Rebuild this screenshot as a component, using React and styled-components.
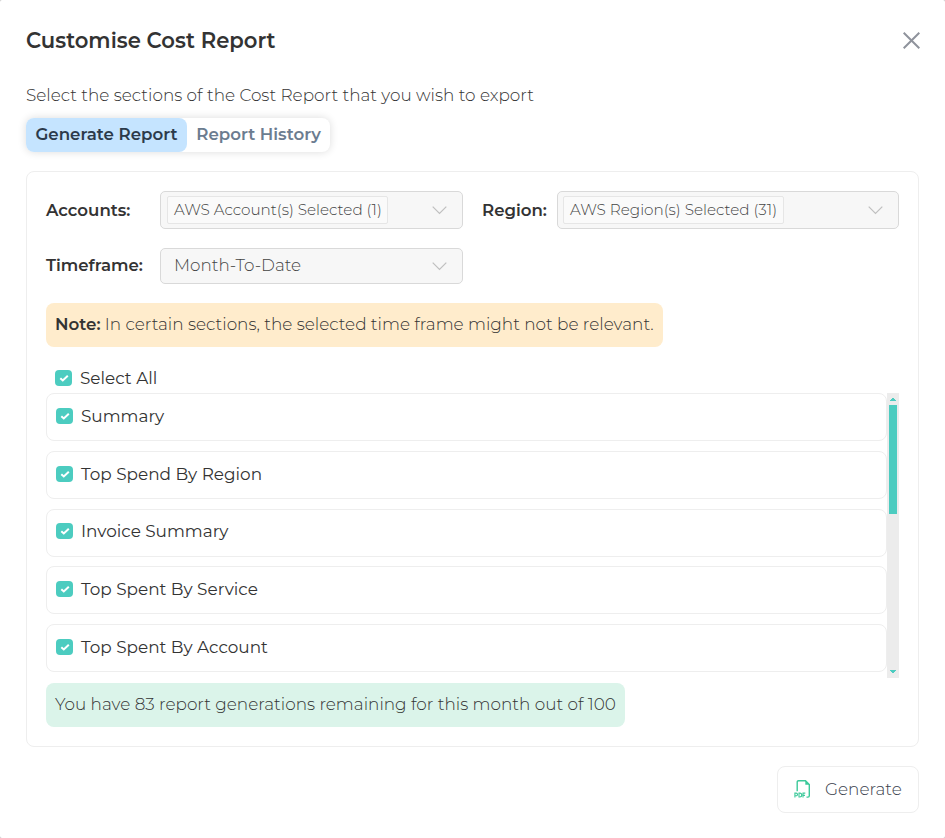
import React, { useState } from "react";
import styled, { createGlobalStyle } from "styled-components";

const GlobalStyle = createGlobalStyle`
  *, *::before, *::after { box-sizing: border-box; }
  body {
    margin: 0;
    background: #c4c4c4;
    color: #333;
    font-family: Montserrat, Inter, sans-serif;
    font-size: 16.87px;
    line-height: 24px;
  }
  button { font: inherit; color: inherit; cursor: pointer; }
`;

const Dialog = styled.main`
  height: 838px;
  padding: 26px 26px 24px;
  background: #fff;
  border-radius: 2px;
  display: flex;
  flex-direction: column;
  align-items: stretch;
`;

const Header = styled.header`
  display: flex;
  justify-content: space-between;
  align-items: flex-start;
  height: 30px;
`;

const Title = styled.h1`
  margin: 0;
  font-size: 21.15px;
  font-weight: 600;
  line-height: 30px;
`;

const CloseButton = styled.button`
  display: flex;
  width: 17px;
  height: 17px;
  margin: 6px -1px 0 0;
  padding: 0;
  border: 0;
  background: none;
  color: #8f939c;
`;

const Intro = styled.p`
  margin: 27px 0 11px;
  font-weight: 300;
  line-height: 24px;
`;

const Tabs = styled.div`
  display: flex;
  align-self: flex-start;
  width: 304px;
  height: 34px;
  border-radius: 8px;
  background: #fff;
  box-shadow: 0 0 8px rgba(0, 0, 0, 0.14);
`;

const Tab = styled.button`
  width: ${(p) => (p.$active ? 161 : 143)}px;
  padding: 0 0 2px;
  border: 0;
  border-radius: 8px;
  font-size: 16.65px;
  font-weight: 600;
  white-space: nowrap;
  color: ${(p) => (p.$active ? "#2c3a4b" : "#6b7c90")};
  background: ${(p) => (p.$active ? "#c5e4ff" : "transparent")};
`;

const Panel = styled.section`
  display: flex;
  flex-direction: column;
  height: 576px;
  margin-top: 19px;
  padding: 19px;
  border: 1px solid #eee;
  border-radius: 8px;
`;

const Filters = styled.div`
  display: grid;
  grid-template-columns: 114px 303px 94px 342px;
  grid-template-rows: 38px 36px;
  row-gap: 19px;
`;

const Label = styled.span`
  font-size: 16.6px;
  font-weight: 600;
  line-height: 24px;
  padding-top: ${(p) => p.$top}px;
  padding-left: ${(p) => (p.$inset ? 19 : 0)}px;
`;

const Select = styled.div`
  display: flex;
  align-items: center;
  justify-content: space-between;
  padding: 0 15px 0 ${(p) => (p.$plain ? 13 : p.$tight ? 5 : 6)}px;
  border: 1px solid #d9d9d9;
  border-radius: 5px;
  background: #f7f7f7;
`;

const SelectValue = styled.span`
  font-size: 16.8px;
  font-weight: 300;
  color: #444;
  line-height: 24px;
  padding-bottom: 2px;
`;

const Tag = styled.span`
  width: 221px;
  height: 28px;
  padding-left: 6px;
  border: 1px solid #e6e6e6;
  border-radius: 2px;
  background: #fafafa;
  color: #444;
  font-size: 15.2px;
  font-weight: 300;
  line-height: 26px;
  white-space: nowrap;
`;

const Banner = styled.p`
  align-self: flex-start;
  width: ${(p) => p.$width}px;
  height: 44px;
  margin: ${(p) => p.$top}px 0 0;
  padding: 9px 0 0 9px;
  border-radius: 8px;
  background: ${(p) => p.$fill};
  font-weight: 300;
  line-height: 24px;
  white-space: nowrap;
`;

const Strong = styled.strong`
  font-size: 16.7px;
  font-weight: 600;
`;

const CheckLine = styled.label`
  display: flex;
  align-items: center;
  gap: 8px;
  height: 24px;
  font-weight: 400;
`;

const SelectAll = styled(CheckLine)`
  margin: 19px 0 3px;
  padding-left: 9px;
`;

const CheckInput = styled.input`
  position: absolute;
  opacity: 0;
  pointer-events: none;
`;

const CheckBox = styled.span`
  display: flex;
  align-items: center;
  justify-content: center;
  width: 17px;
  height: 16px;
  border-radius: 4px;
  background: #4cccc0;
`;

const ListArea = styled.div`
  display: flex;
  height: 285px;
`;

const List = styled.ul`
  flex: 1;
  display: flex;
  flex-direction: column;
  gap: 9.8px;
  margin: 0;
  padding: 0;
  list-style: none;
  line-height: 22px;
`;

const ListItem = styled.li`
  height: 48px;
  padding: 9.8px 9px;
  border: 1px solid #eee;
  border-radius: 8px;
`;

const ScrollTrack = styled.div`
  display: flex;
  flex-direction: column;
  align-items: center;
  width: 12px;
  padding: 5px 0;
  background: #ececec;
`;

const ScrollThumb = styled.div`
  width: 8px;
  height: 109px;
  margin: 4px 0 auto;
  background: #4cccc0;
`;

const Footer = styled.footer`
  display: flex;
  justify-content: flex-end;
  margin-top: 19px;
`;

const GenerateButton = styled.button`
  display: flex;
  align-items: center;
  gap: 13px;
  width: 142px;
  height: 47px;
  padding: 0 0 1px 16px;
  border: 1px solid #eee;
  border-radius: 8px;
  background: #fff;
  color: #39414d;
  font-weight: 300;
`;

const CloseIcon = () => (
  <svg width="17" height="17" viewBox="0 0 17 17" fill="none" stroke="currentColor" strokeWidth="2">
    <path d="M.7.7l15.6 15.6M16.3.7L.7 16.3" />
  </svg>
);

const Chevron = () => (
  <svg width="16" height="10" viewBox="0 0 16 10" fill="none" stroke="#bfbfbf" strokeWidth="1.2">
    <path d="M1.7 1.7L8.5 8.5l6.8-6.8" />
  </svg>
);

const Arrow = ({ down }) => (
  <svg width="6" height="3" viewBox="0 0 6 3" fill="#4cccc0" shapeRendering="crispEdges">
    <path d={down ? "M0 0h6v1H5v1H4v1H2V2H1V1H0z" : "M0 3h6V2H5V1H4V0H2v1H1v1H0z"} />
  </svg>
);

const PdfIcon = () => (
  <svg width="18" height="18" viewBox="0 0 18 18" fill="none" stroke="#3cc99a" strokeWidth="1.4">
    <path d="M3.2 11.3V2q0-1.3 1.3-1.3h7L15.3 4.5v11.3q0 1.3-1.3 1.3h-1.5" />
    <path d="M11.3.5v4.2h4.2z" fill="#3cc99a" stroke="none" />
    <path strokeWidth="1.1" d="M.9 17.5v-4.4h1.3a1.3 1.3 0 010 2.6H.9M5 13.1v3.9h.8a1.95 1.95 0 000-3.9zM9 17.5v-4.4h2.3M9 15.4h2" />
  </svg>
);

function Check({ label, as: Line = CheckLine }) {
  const [on, setOn] = useState(true);
  return (
    <Line>
      <CheckInput type="checkbox" checked={on} onChange={() => setOn(!on)} />
      <CheckBox>
        {on && (
          <svg width="17" height="16" viewBox="0 0 17 16" fill="none" stroke="#fff" strokeWidth="2">
            <path d="M5.3 8.2l2.5 2.3 5-4.7" />
          </svg>
        )}
      </CheckBox>
      {label}
    </Line>
  );
}

const sections = [
  "Summary",
  "Top Spend By Region",
  "Invoice Summary",
  "Top Spent By Service",
  "Top Spent By Account",
];

export default function App() {
  return (
    <>
      <GlobalStyle />
      <Dialog>
        <Header>
          <Title>Customise Cost Report</Title>
          <CloseButton aria-label="Close"><CloseIcon /></CloseButton>
        </Header>
        <Intro>Select the sections of the Cost Report that you wish to export</Intro>
        <Tabs>
          <Tab $active>Generate Report</Tab>
          <Tab>Report History</Tab>
        </Tabs>
        <Panel>
          <Filters>
            <Label $top={7}>Accounts:</Label>
            <Select><Tag>AWS Account(s) Selected (1)</Tag><Chevron /></Select>
            <Label $top={7} $inset>Region:</Label>
            <Select $tight><Tag>AWS Region(s) Selected (31)</Tag><Chevron /></Select>
            <Label $top={5}>Timeframe:</Label>
            <Select $plain><SelectValue>Month-To-Date</SelectValue><Chevron /></Select>
          </Filters>
          <Banner $width={617} $top={19} $fill="#ffeccc">
            <Strong>Note:</Strong> In certain sections, the selected time frame might not be relevant.
          </Banner>
          <Check as={SelectAll} label="Select All" />
          <ListArea>
            <List>
              {sections.map((name) => (
                <ListItem key={name}><Check label={name} /></ListItem>
              ))}
            </List>
            <ScrollTrack>
              <Arrow />
              <ScrollThumb />
              <Arrow down />
            </ScrollTrack>
          </ListArea>
          <Banner $width={579} $top={5} $fill="#dbf4ea">
            You have 83 report generations remaining for this month out of 100
          </Banner>
        </Panel>
        <Footer>
          <GenerateButton><PdfIcon />Generate</GenerateButton>
        </Footer>
      </Dialog>
    </>
  );
}
